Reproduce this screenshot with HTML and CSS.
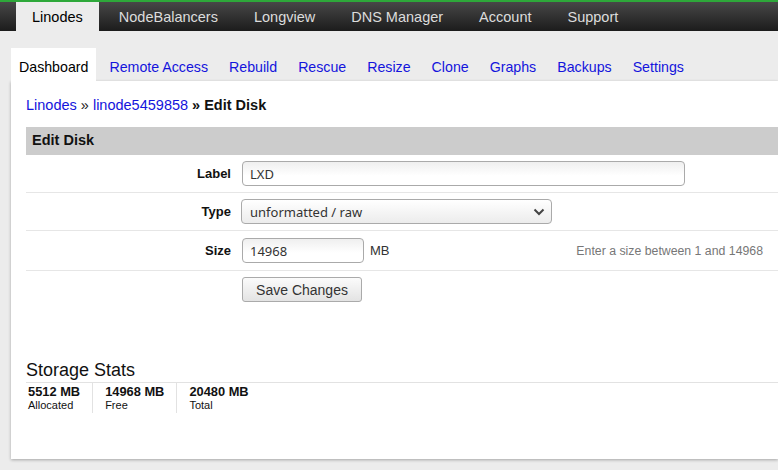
FILE: index.html
```html
<!DOCTYPE html>
<html>
<head>
<meta charset="utf-8">
<link rel="stylesheet" href="styles.css">
</head>
<body>
<nav class="topnav">
  <a class="topnav-item active">Linodes</a>
  <a class="topnav-item">NodeBalancers</a>
  <a class="topnav-item">Longview</a>
  <a class="topnav-item">DNS Manager</a>
  <a class="topnav-item">Account</a>
  <a class="topnav-item">Support</a>
</nav>
<div class="subnav">
  <a class="subtab active">Dashboard</a>
  <a class="subtab">Remote Access</a>
  <a class="subtab">Rebuild</a>
  <a class="subtab">Rescue</a>
  <a class="subtab">Resize</a>
  <a class="subtab">Clone</a>
  <a class="subtab">Graphs</a>
  <a class="subtab">Backups</a>
  <a class="subtab">Settings</a>
</div>
<main class="panel">
  <div class="crumbs"><a class="link">Linodes</a> » <a class="link">linode5459858</a> <b>» Edit Disk</b></div>
  <div class="section-head">Edit Disk</div>
  <div class="form">
    <div class="row">
      <div class="label">Label</div>
      <div class="field"><input class="text-input wide" type="text" value="LXD"></div>
    </div>
    <div class="row">
      <div class="label">Type</div>
      <div class="field">
        <div class="select-wrap">
          <select class="select"><option>unformatted / raw</option></select>
          <svg class="chevron" width="12" height="8" viewBox="0 0 12 8"><path d="M1.5 1.5 L6 6 L10.5 1.5" fill="none" stroke="#444" stroke-width="2"/></svg>
        </div>
      </div>
    </div>
    <div class="row tall">
      <div class="label">Size</div>
      <div class="field"><input class="text-input narrow" type="text" value="14968"><span class="unit">MB</span></div>
      <div class="hint">Enter a size between 1 and 14968</div>
    </div>
    <div class="row last">
      <div class="label"></div>
      <div class="field"><button class="btn">Save Changes</button></div>
    </div>
  </div>
  <h2 class="stats-title">Storage Stats</h2>
  <div class="stats">
    <div class="stat first"><div class="stat-num">5512 MB</div><div class="stat-label">Allocated</div></div>
    <div class="stat"><div class="stat-num">14968 MB</div><div class="stat-label">Free</div></div>
    <div class="stat last"><div class="stat-num">20480 MB</div><div class="stat-label">Total</div></div>
  </div>
</main>
</body>
</html>
```
FILE: styles.css
```css
html, body {
  margin: 0;
  padding: 0;
  background: #ececec;
  font-family: "Liberation Sans", Arial, sans-serif;
  color: #111;
  overflow: hidden;
  width: 778px;
  height: 470px;
}
.topnav {
  display: flex;
  height: 29px;
  border-top: 2px solid #2ea83a;
  background: linear-gradient(#474747, #1c1c1c);
  padding-left: 16px;
}
.topnav-item {
  display: flex;
  align-items: center;
  padding: 0 18px;
  font-size: 14.5px;
  color: #dcdcdc;
}
.topnav-item.active {
  background: #ececec;
  color: #000;
  padding: 0 16px;
  margin-right: 2px;
}
.subnav {
  display: flex;
  padding: 17px 0 0 11px;
  height: 33px;
}
.subtab {
  display: block;
  box-sizing: border-box;
  height: 33px;
  padding: 11px 8px 0;
  margin-right: 5px;
  font-size: 14.2px;
  line-height: 17px;
  color: #1414dc;
}
.subtab.active {
  background: #fff;
  color: #000;
}
.panel {
  display: block;
  margin-left: 11px;
  background: #fff;
  padding: 15px 0 46px 15px;
  box-shadow: 0 1px 3px rgba(0,0,0,0.3);
}
.crumbs {
  font-size: 14.5px;
  line-height: 18px;
  color: #222;
}
.crumbs b { color: #111; }
.link { color: #1414dc; }
.section-head {
  margin-top: 13px;
  height: 28px;
  line-height: 27px;
  background: #cccccc;
  font-weight: bold;
  font-size: 14.5px;
  padding-left: 6px;
  color: #111;
}
.form { display: flex; flex-direction: column; }
.row {
  display: flex;
  align-items: center;
  padding: 6px 0;
  border-bottom: 1px solid #e6e6e6;
}
.row.tall { padding: 7px 0; }
.row.last { border-bottom: none; }
.label {
  width: 205px;
  padding-right: 11px;
  text-align: right;
  font-weight: bold;
  font-size: 13px;
}
.field { display: flex; align-items: center; flex: 1; }
.text-input {
  box-sizing: border-box;
  height: 25px;
  border: 1px solid #aaa;
  border-radius: 4px;
  background: linear-gradient(#efefef, #fff 60%);
  padding: 0 7px;
  font-family: "Noto Sans", "Open Sans", sans-serif;
  font-size: 13px;
  color: #333;
  outline: none;
}
.wide { width: 443px; }
.narrow { width: 122px; }
.unit { margin-left: 6px; font-size: 13px; color: #333; }
.hint {
  font-size: 12.3px;
  color: #777;
  padding-right: 15px;
}
.select-wrap { position: relative; width: 311px; margin-left: -1px; }
.select {
  appearance: none;
  -webkit-appearance: none;
  box-sizing: border-box;
  width: 311px;
  height: 25px;
  border: 1px solid #aaa;
  border-radius: 4px;
  background: linear-gradient(#fff, #ececec);
  padding: 0 8px;
  font-family: "Noto Sans", "Open Sans", sans-serif;
  font-size: 13px;
  color: #333;
}
.chevron { position: absolute; right: 7px; top: 9px; }
.btn {
  box-sizing: border-box;
  width: 120px;
  height: 25px;
  border: 1px solid #aaa;
  border-radius: 3px;
  background: linear-gradient(#fbfbfb, #e3e3e3);
  font-family: "Liberation Sans", Arial, sans-serif;
  font-size: 14px;
  color: #333;
  padding: 0;
}
.stats-title {
  margin: 50px 0 0;
  font-weight: normal;
  font-size: 18px;
  line-height: 24px;
  color: #111;
  border-bottom: 1px solid #e2e2e2;
}
.stats { display: flex; }
.stat {
  padding: 1px 12px 0;
  border-right: 1px solid #e2e2e2;
  height: 29px;
}
.stat.first { padding-left: 2px; }
.stat.last { border-right: none; }
.stat-num { font-weight: bold; font-size: 12.85px; line-height: 15px; }
.stat-label { font-size: 11px; line-height: 13px; }
```
